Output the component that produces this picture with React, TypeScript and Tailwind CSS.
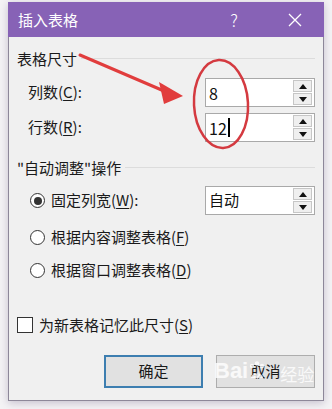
import React from 'react';

const Spinner: React.FC = () => (
    <div className="flex flex-col gap-[1px] w-[19px]">
        <div className="h-[12px] border border-[#c6c6c6] bg-[#efefef] flex items-center justify-center">
            <svg width="8" height="5" viewBox="0 0 8 5"><polygon points="0,5 8,5 4,0" fill="#111" /></svg>
        </div>
        <div className="h-[12px] border border-[#c6c6c6] bg-[#efefef] flex items-center justify-center">
            <svg width="8" height="5" viewBox="0 0 8 5"><polygon points="0,0 8,0 4,5" fill="#111" /></svg>
        </div>
    </div>
);

const NumberBox: React.FC<{ value: string; caret?: boolean; cjk?: boolean; h?: string }> = ({ value, caret, cjk }) => (
    <div className="w-[110px] h-[29px] bg-white border border-[#a9a9a9] flex items-center justify-between pl-[3px] pr-[2px]">
        <div className={`flex items-center text-[#111] ${cjk ? 'text-[15px]' : 'text-[16px]'}`}>
            <span>{value}</span>
            {caret && <span className="inline-block w-[2px] h-[19px] bg-black ml-[1px]" />}
        </div>
        <Spinner />
    </div>
);

const Radio: React.FC<{ checked?: boolean }> = ({ checked }) => (
    <div className="w-[15px] h-[15px] rounded-full border border-[#333] bg-white flex items-center justify-center">
        {checked && <div className="w-[8px] h-[8px] rounded-full bg-[#333]" />}
    </div>
);

const U: React.FC<{ children: React.ReactNode }> = ({ children }) => <span className="underline underline-offset-2">{children}</span>;

export default function App() {
    return (
        <div className="relative w-[332px] h-[409px] bg-[#f4f3f5] pt-[2px] pl-[8px] font-['Noto_Sans_CJK_SC',sans-serif] text-[#1a1a1a] overflow-hidden">
            <div className="w-[316px] h-[399px] flex flex-col shadow-[0_2px_8px_rgba(60,40,90,0.25)]">
                {/* Title bar */}
                <div className="h-[35px] bg-[#8762b6] flex items-center text-white shrink-0">
                    <span className="pl-[10px] text-[15px] leading-none">插入表格</span>
                    <span className="ml-auto mr-[50px] text-[17px] font-light leading-none">?</span>
                    <svg className="mr-[22px]" width="14" height="14" viewBox="0 0 14 14">
                        <path d="M1 1 L13 13 M13 1 L1 13" stroke="white" strokeWidth="1.3" fill="none" />
                    </svg>
                </div>

                {/* Body */}
                <div className="flex-1 bg-[#f0f0f0] border-l border-r border-b border-[#8d8799] pl-[8px] pr-[8px] flex flex-col text-[15px]">
                    {/* Section 1 */}
                    <div className="mt-[11px] h-[20px] flex items-center gap-[4px]">
                        <span className="leading-none">表格尺寸</span>
                        <div className="flex-1 h-px bg-[#dcdcdc]" />
                    </div>
                    <div className="mt-[10px] flex items-center justify-between pl-[11px]">
                        <span>列数(<U>C</U>):</span>
                        <NumberBox value="8" />
                    </div>
                    <div className="mt-[6px] flex items-center justify-between pl-[11px]">
                        <span>行数(<U>R</U>):</span>
                        <NumberBox value="12" caret />
                    </div>

                    {/* Section 2 */}
                    <div className="mt-[15px] h-[20px] flex items-center gap-[4px]">
                        <span className="leading-none">"自动调整"操作</span>
                        <div className="flex-1 h-px bg-[#dcdcdc]" />
                    </div>
                    <div className="mt-[9px] flex items-center justify-between pl-[13px]">
                        <div className="flex items-center gap-[6px]">
                            <Radio checked />
                            <span>固定列宽(<U>W</U>):</span>
                        </div>
                        <NumberBox value="自动" cjk />
                    </div>
                    <div className="mt-[11px] h-[22px] flex items-center gap-[6px] pl-[13px]">
                        <Radio />
                        <span>根据内容调整表格(<U>F</U>)</span>
                    </div>
                    <div className="mt-[11px] h-[22px] flex items-center gap-[6px] pl-[13px]">
                        <Radio />
                        <span>根据窗口调整表格(<U>D</U>)</span>
                    </div>

                    {/* Checkbox */}
                    <div className="mt-[33px] h-[22px] flex items-center gap-[6px]">
                        <div className="w-[16px] h-[16px] border border-[#333] bg-white" />
                        <span>为新表格记忆此尺寸(<U>S</U>)</span>
                    </div>

                    {/* Buttons */}
                    <div className="mt-[19px] flex justify-end gap-[13px]">
                        <button className="w-[99px] h-[33px] bg-[#e1e1e1] border-2 border-[#3d7eb0] text-[15px]">确定</button>
                        <button className="w-[99px] h-[33px] bg-[#e1e1e1] border border-[#adadad] text-[15px]">取消</button>
                    </div>
                </div>
            </div>

            {/* Watermark */}
            <div className="absolute left-[214px] top-[360px] flex items-end text-white/80 pointer-events-none">
                <span className="text-[22px] font-bold leading-none font-['Liberation_Sans',sans-serif]">Bai</span>
                <svg width="18" height="20" viewBox="0 0 18 20" className="mb-[1px]">
                    <circle cx="4" cy="5" r="2.2" fill="rgba(255,255,255,0.8)" />
                    <circle cx="9" cy="2.5" r="2.2" fill="rgba(255,255,255,0.8)" />
                    <circle cx="14" cy="5" r="2.2" fill="rgba(255,255,255,0.8)" />
                    <path d="M3 17 C3 11 15 11 15 17 Z" fill="rgba(255,255,255,0.8)" />
                </svg>
                <span className="text-[17px] leading-none ml-[14px]">经验</span>
            </div>

            {/* Red annotations */}
            <svg className="absolute left-0 top-0 pointer-events-none" width="332" height="409" viewBox="0 0 332 409">
                <ellipse cx="221" cy="104" rx="27" ry="44" fill="none" stroke="#d43a40" strokeWidth="2.5" transform="rotate(-3 221 104)" />
                <path d="M80 55 L164 91" stroke="#e13d3d" strokeWidth="3" strokeLinecap="round" />
                <polygon points="183,96 159,82 164,104" fill="#e13d3d" />
            </svg>
        </div>
    );
}
